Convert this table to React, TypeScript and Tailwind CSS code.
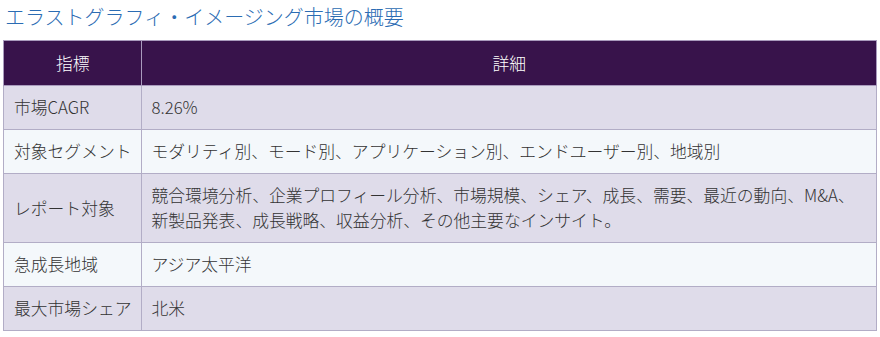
const rows: { label: string; detail: string[] }[] = [
  { label: '市場CAGR', detail: ['8.26%'] },
  {
    label: '対象セグメント',
    detail: ['モダリティ別、モード別、アプリケーション別、エンドユーザー別、地域別'],
  },
  {
    label: 'レポート対象',
    detail: [
      '競合環境分析、企業プロフィール分析、市場規模、シェア、成長、需要、最近の動向、M&A、',
      '新製品発表、成長戦略、収益分析、その他主要なインサイト。',
    ],
  },
  { label: '急成長地域', detail: ['アジア太平洋'] },
  { label: '最大市場シェア', detail: ['北米'] },
];

export default function App() {
  return (
    <div className="w-[880px] h-[337px] bg-white overflow-hidden font-['Noto_Sans_CJK_JP','Noto_Sans',sans-serif]">
      <h2 className="pl-[5px] pt-[3px] mb-[9px] text-[20px] leading-[28px] font-light text-[#2b6cb3] whitespace-nowrap">
        エラストグラフィ・イメージング市場の概要
      </h2>

      <table className="ml-[3px] w-[874px] border-collapse text-[16.8px] leading-[25px] font-light text-[#333]">
        <thead>
          <tr className="bg-[#38134b] text-white">
            <th className="w-[136px] h-[45px] border border-[#a99bbd] font-light text-center">指標</th>
            <th className="h-[45px] border border-[#a99bbd] font-light text-center">詳細</th>
          </tr>
        </thead>
        <tbody>
          {rows.map((r, i) => (
            <tr key={r.label} className={i % 2 === 0 ? 'bg-[#dfdcea]' : 'bg-[#f4f8fb]'}>
              <td className="border border-[#b2adc6] px-[10px] py-[9px] whitespace-nowrap align-middle">
                {r.label}
              </td>
              <td className="border border-[#b2adc6] pl-[9px] pr-[8px] py-[9px] align-middle">
                {r.detail.map((line) => (
                  <div key={line} className="whitespace-nowrap">
                    {line}
                  </div>
                ))}
              </td>
            </tr>
          ))}
        </tbody>
      </table>
    </div>
  );
}
